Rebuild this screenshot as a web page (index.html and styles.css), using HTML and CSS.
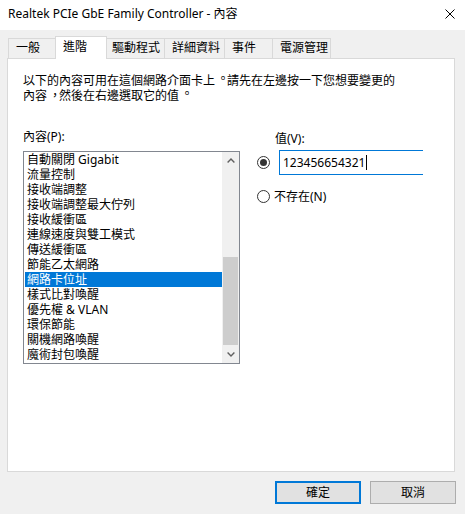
FILE: index.html
```html
<!DOCTYPE html>
<html lang="zh-TW">
<head>
<meta charset="utf-8">
<title>內容</title>
<link rel="stylesheet" href="styles.css">
</head>
<body>
<div class="window">
  <div class="titlebar">
    <span class="title">Realtek PCIe GbE Family Controller - 內容</span>
    <svg class="close" width="10" height="10" viewBox="0 0 10 10"><path d="M0.5 0.5 L9.5 9.5 M9.5 0.5 L0.5 9.5" stroke="#000" stroke-width="1" fill="none"/></svg>
  </div>
  <div class="tabs">
    <div class="tab t1">一般</div>
    <div class="tab active">進階</div>
    <div class="tab t3">驅動程式</div>
    <div class="tab t4">詳細資料</div>
    <div class="tab t5">事件</div>
    <div class="tab t6">電源管理</div>
  </div>
  <div class="panel">
    <p class="desc">以下的內容可用在這個網路介面卡上<span class="punct">。</span>請先在左邊按一下您想要變更的<br>內容<span class="comma">，</span>然後在右邊選取它的值<span class="punct">。</span></p>
    <div class="cols">
      <div class="left">
        <div class="label">內容(P):</div>
        <div class="listbox">
          <ul class="items">
            <li>自動關閉 Gigabit</li>
            <li>流量控制</li>
            <li>接收端調整</li>
            <li>接收端調整最大佇列</li>
            <li>接收緩衝區</li>
            <li>連線速度與雙工模式</li>
            <li>傳送緩衝區</li>
            <li>節能乙太網路</li>
            <li class="sel">網路卡位址</li>
            <li>樣式比對喚醒</li>
            <li>優先權 &amp; VLAN</li>
            <li>環保節能</li>
            <li>關機網路喚醒</li>
            <li>魔術封包喚醒</li>
          </ul>
          <div class="scrollbar">
            <div class="sb-btn"><svg width="8" height="5" viewBox="0 0 8 5"><path d="M0.6 4.4 L4 1 L7.4 4.4" stroke="#606060" stroke-width="1.4" fill="none"/></svg></div>
            <div class="sb-track"><div class="sb-thumb"></div></div>
            <div class="sb-btn"><svg width="8" height="5" viewBox="0 0 8 5"><path d="M0.6 0.6 L4 4 L7.4 0.6" stroke="#606060" stroke-width="1.4" fill="none"/></svg></div>
          </div>
        </div>
      </div>
      <div class="right">
        <div class="vlabel">值(V):</div>
        <div class="vrow">
          <span class="radio checked"></span>
          <div class="input">123456654321<span class="caret"></span></div>
        </div>
        <div class="vrow2">
          <span class="radio"></span>
          <span class="rtext">不存在(N)</span>
        </div>
      </div>
    </div>
  </div>
  <div class="footer">
    <button class="btn default">確定</button>
    <button class="btn">取消</button>
  </div>
</div>
</body>
</html>
```

FILE: styles.css
```css
html, body {
  margin: 0;
  padding: 0;
}
body {
  background: #f0f0f0;
  font-family: "Noto Sans", "Noto Sans CJK TC", sans-serif;
  font-size: 12px;
  color: #000;
  width: 465px;
  height: 514px;
  overflow: hidden;
}
.window {
  width: 465px;
  height: 514px;
}
.titlebar {
  box-sizing: border-box;
  height: 30px;
  background: #fff;
  display: flex;
  align-items: center;
  justify-content: space-between;
  padding: 0 10px 3px 8px;
}
.title {
  line-height: 16px;
  white-space: nowrap;
}
.close {
  display: block;
  margin-top: 1px;
}
.tabs {
  display: flex;
  align-items: flex-end;
  height: 22px;
  margin-top: 6px;
  padding-left: 8px;
}
.tab {
  box-sizing: border-box;
  height: 20px;
  border: 1px solid #d9d9d9;
  border-bottom: none;
  background: #f0f0f0;
  padding-left: 7px;
  line-height: 18px;
  margin-left: -1px;
  white-space: nowrap;
}
.t1 { margin-left: 0; width: 50px; }
.t3 { width: 61px; }
.t4 { width: 61px; }
.t5 { width: 49px; }
.t6 { width: 59px; }
.tab.active {
  height: 23px;
  width: 52px;
  margin-bottom: -1px;
  margin-left: -3px;
  margin-right: -2px;
  background: #fff;
  line-height: 20px;
  position: relative;
  z-index: 1;
}
.panel {
  box-sizing: border-box;
  margin-left: 7px;
  width: 448px;
  height: 414px;
  background: #fff;
  border: 1px solid #d9d9d9;
  padding: 14px 15px 0;
}
.desc {
  margin: 0;
  line-height: 15px;
  white-space: nowrap;
}
.punct {
  position: relative;
  top: -2px;
  left: 2px;
}
.comma {
  position: relative;
  left: 2px;
}
.cols {
  display: flex;
  margin-top: 26px;
}
.left {
  width: 217px;
}
.label {
  line-height: 15px;
}
.listbox {
  box-sizing: border-box;
  margin-top: 7px;
  width: 217px;
  height: 213px;
  border: 1px solid #828790;
  display: flex;
}
.items {
  list-style: none;
  margin: 0;
  padding: 0 0 0 1px;
  width: 198px;
  box-sizing: border-box;
}
.items li {
  height: 15px;
  line-height: 15px;
  padding-left: 2px;
  white-space: nowrap;
}
.items li.sel {
  background: #0078d7;
  color: #fff;
}
.scrollbar {
  width: 17px;
  background: #f0f0f0;
  display: flex;
  flex-direction: column;
}
.sb-btn {
  height: 17px;
  display: flex;
  align-items: center;
  justify-content: center;
}
.sb-btn svg { display: block; }
.sb-track {
  flex: 1;
  display: flex;
  flex-direction: column;
  justify-content: flex-end;
  padding: 0 1px 1px;
}
.sb-thumb {
  height: 88px;
  background: #cdcdcd;
}
.right {
  margin-left: 17px;
}
.vlabel {
  margin-left: 18px;
  margin-top: 2px;
  line-height: 15px;
}
.vrow {
  display: flex;
  align-items: center;
  margin-top: 4px;
}
.radio {
  box-sizing: border-box;
  width: 13px;
  height: 13px;
  border: 1px solid #333;
  border-radius: 50%;
  background: #fff;
  display: flex;
  align-items: center;
  justify-content: center;
  flex: none;
}
.radio.checked::after {
  content: "";
  width: 7px;
  height: 7px;
  border-radius: 50%;
  background: #333;
}
.input {
  box-sizing: border-box;
  width: 144px;
  height: 25px;
  margin-left: 9px;
  border: 1px solid #0078d7;
  border-right: none;
  padding-left: 3px;
  line-height: 23px;
  white-space: nowrap;
  display: flex;
  align-items: center;
}
.caret {
  display: inline-block;
  width: 1px;
  height: 15px;
  background: #000;
  margin-left: 1px;
}
.vrow2 {
  display: flex;
  align-items: center;
  margin-top: 14px;
  height: 15px;
}
.rtext {
  margin-left: 4px;
  line-height: 15px;
}
.footer {
  display: flex;
  justify-content: flex-end;
  gap: 9px;
  padding: 9px 9px 0 0;
}
.btn {
  box-sizing: border-box;
  width: 86px;
  height: 23px;
  background: #e1e1e1;
  border: 1px solid #adadad;
  font: inherit;
  color: #000;
  padding: 0;
  line-height: 21px;
}
.btn.default {
  border: 2px solid #0078d7;
  line-height: 19px;
}
```
